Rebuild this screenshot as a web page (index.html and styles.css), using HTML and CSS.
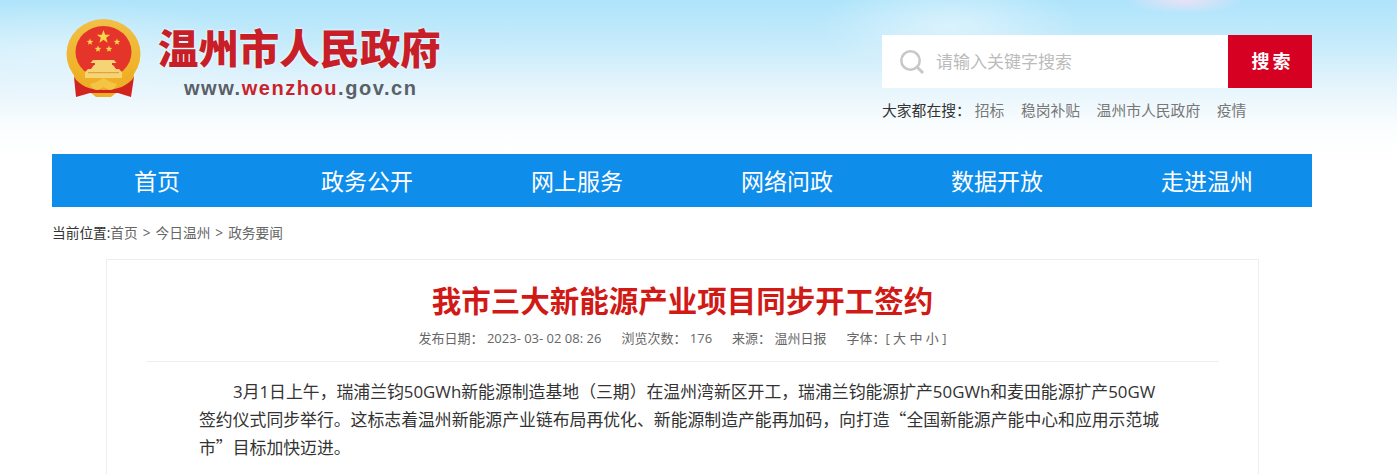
FILE: index.html
```html
<!DOCTYPE html>
<html lang="zh-CN">
<head>
<meta charset="utf-8">
<title>我市三大新能源产业项目同步开工签约</title>
<link rel="stylesheet" href="styles.css">
</head>
<body>
<header class="top">
  <div class="wrap top-inner">
    <a class="brand" href="#">
      <svg class="emblem" viewBox="0 0 76 80" width="76" height="80" aria-hidden="true">
        <defs>
          <linearGradient id="gold" x1="0" y1="0" x2="0" y2="1">
            <stop offset="0" stop-color="#f0c048"/><stop offset="1" stop-color="#f0ad1e"/>
          </linearGradient>
        </defs>
        <path d="M8 58 L10 78 L24 74 L52 74 L65 78 L68 58 Z" fill="#d2231f"/>
        <ellipse cx="37.500" cy="35" rx="37" ry="35" fill="url(#gold)"/>
        <ellipse cx="37.500" cy="33" rx="28" ry="26" fill="#e5352a"/>
        <path d="M37.500 11.000L39.146 15.734 44.157 15.837 40.163 18.866 41.614 23.663 37.500 20.800 33.386 23.663 34.837 18.866 30.843 15.837 35.854 15.734Z" fill="#f8d84a"/>
        <path d="M24 19.500L24.823 21.867 27.329 21.918 25.332 23.433 26.057 25.832 24 24.400 21.943 25.832 22.668 23.433 20.671 21.918 23.177 21.867ZM51 19.500L51.823 21.867 54.329 21.918 52.332 23.433 53.057 25.832 51 24.400 48.943 25.832 49.668 23.433 47.671 21.918 50.177 21.867ZM32 26.500L32.823 28.867 35.329 28.918 33.332 30.433 34.057 32.832 32 31.400 29.943 32.832 30.668 30.433 28.671 28.918 31.177 28.867ZM43 26.500L43.823 28.867 46.329 28.918 44.332 30.433 45.057 32.832 43 31.400 40.943 32.832 41.668 30.433 39.671 28.918 42.177 28.867Z" fill="#f8d84a"/>
        <path d="M27 41h21l2.500 3H46v2h1l3 4h3l3 3v6H19v-6l3-3h3l3-4h1v-2h-4.500z" fill="#f6d374"/>
        <path d="M22 53h31v1.200H22z" fill="#e0a53a"/>
        <path d="M8 50c7 9 16 13 29.500 13S60 59 67 50l1 8c-6 9-17 13-30.500 13S14 67 8 58z" fill="#eeae28"/>
        <path d="M24 65c5-1 9-3 13.500-6 4.500 3 8.500 5 13.500 6-2 5-5 6-8 6l-5.500-3-5.500 3c-3 0-6-1-8-6z" fill="#f4c544"/>
        <path d="M25 74h25l-5 4H30z" fill="#eeae28"/>
      </svg>
      <div class="brand-text">
        <div class="brand-name">温州市人民政府</div>
        <div class="brand-url">www.<em>wenzhou</em>.gov.cn</div>
      </div>
    </a>
    <div class="search-area">
      <form class="search">
        <svg class="search-icon" viewBox="0 0 26 26" width="26" height="26" aria-hidden="true">
          <circle cx="11.500" cy="11.500" r="9.200" fill="none" stroke="#c8c8c8" stroke-width="2.600"/>
          <path d="M18.500 18.500l5.500 5.500" stroke="#c8c8c8" stroke-width="3" fill="none"/>
        </svg>
        <span class="placeholder">请输入关键字搜索</span>
        <span class="search-btn">搜索</span>
      </form>
      <div class="hot">
        <span class="hot-label">大家都在搜：</span>
        <a href="#">招标</a><a href="#">稳岗补贴</a><a href="#">温州市人民政府</a><a href="#">疫情</a>
      </div>
    </div>
  </div>
</header>
<nav class="wrap nav">
  <a href="#">首页</a><a href="#">政务公开</a><a href="#">网上服务</a><a href="#">网络问政</a><a href="#">数据开放</a><a href="#">走进温州</a>
</nav>
<div class="wrap crumb"><b>当前位置:</b><a href="#">首页</a><i>&gt;</i><a href="#">今日温州</a><i>&gt;</i><a href="#">政务要闻</a></div>
<main class="card">
  <h1>我市三大新能源产业项目同步开工签约</h1>
  <div class="meta">
    <span>发布日期：&nbsp;2023- 03- 02 08: 26</span>
    <span>浏览次数：&nbsp;176</span>
    <span>来源：&nbsp;温州日报</span>
    <span>字体：[ 大 中 小 ]</span>
  </div>
  <article class="body">
    <p>3月1日上午，瑞浦兰钧50GWh新能源制造基地（三期）在温州湾新区开工，瑞浦兰钧能源扩产50GWh和麦田能源扩产50GW签约仪式同步举行。这标志着温州新能源产业链布局再优化、新能源制造产能再加码，向打造<span class="cjk">“</span>全国新能源产能中心和应用示范城市<span class="cjk">”</span>目标加快迈进。</p>
  </article>
</main>
</body>
</html>
```
FILE: styles.css
```css
* { box-sizing: border-box; }
html, body { margin: 0; padding: 0; height: 474px; overflow: hidden; }
body {
  background: #fff;
  font-family: "Open Sans", "Noto Sans CJK SC", sans-serif;
  color: #333;
}
a { color: inherit; text-decoration: none; }
.wrap { width: 1260px; margin-left: 52px; }
.top {
  height: 154px;
  background:
    radial-gradient(ellipse 130px 50px at 950px 25px, rgba(255,255,255,.45), rgba(255,255,255,0)),
    radial-gradient(ellipse 60px 14px at 1185px 0, rgba(250,225,245,.8), rgba(250,225,245,0)),
    radial-gradient(ellipse 220px 50px at 60px 50px, rgba(255,255,255,.35), rgba(255,255,255,0)),
    linear-gradient(180deg, #aee4fb 0%, #c3eafb 25%, #e4f4fc 55%, #fafdfe 82%, #fff 100%);
}
.top-inner { display: flex; justify-content: space-between; height: 154px; }
.brand { display: flex; padding: 19px 0 0 14px; height: 154px; }
.emblem { display: block; margin-right: 16px; }
.brand-text { padding-top: 4px; }
.brand-name {
  font-family: "Noto Sans CJK SC", sans-serif;
  font-size: 40.400px; line-height: 48px; font-weight: 900; color: #c81e28;
  white-space: nowrap; text-shadow: 0 0 3px #fff;
}
.brand-url {
  margin: 6px 0 0 26px;
  font-family: "Liberation Sans", sans-serif; font-size: 20px; line-height: 22px; font-weight: 700;
  letter-spacing: 1.550px; color: #5a6068; white-space: nowrap;
}
.brand-url em { font-style: normal; color: #c8232c; }
.search-area { width: 430px; padding-top: 35px; }
.search { display: flex; align-items: center; height: 53px; background: #fff; padding-left: 17px; }
.search-icon { flex: none; margin-right: 11px; }
.placeholder { flex: 1; font-size: 17px; line-height: 53px; color: #bbb; }
.search-btn {
  flex: none; width: 84px; height: 53px; line-height: 53px; padding-left: 5px; text-align: center;
  background: #d60022; color: #fff; font-size: 18px; font-weight: 700; letter-spacing: 3px;
}
.hot { display: flex; align-items: center; margin-top: 10px; height: 22px; font-size: 14.800px; color: #777; }
.hot-label { color: #333; margin-right: 4px; }
.hot a { margin-right: 16.500px; }
.nav { display: grid; grid-template-columns: repeat(6, 210px); height: 53px; background: #0f8deb; }
.nav a { color: #fff; font-size: 23px; line-height: 55px; text-align: center; }
.crumb { display: flex; align-items: center; height: 52px; padding-bottom: 2px; font-size: 13.700px; color: #666; }
.crumb b { font-weight: 400; color: #333; }
.crumb i { font-style: normal; margin: 0 5px; }
.card {
  width: 1153px; margin-left: 106px; height: 400px;
  border: 1px solid #eee; padding: 0 39px;
}
h1 {
  margin: 0; padding-top: 21px; height: 66px; line-height: 40px; text-align: center;
  font-size: 29.500px; font-weight: 700; color: #d11a16;
}
.meta {
  display: flex; justify-content: center; gap: 20px; height: 36px; line-height: 25px;
  border-bottom: 1px solid #eee; font-size: 13px; color: #666;
}
.body { padding: 16px 52px 0 53px; font-size: 16.850px; line-height: 28px; color: #333; }
.body p { margin: 0; text-indent: 34px; }
.cjk { font-family: "Noto Sans CJK SC", sans-serif; line-height: 0; }
```
